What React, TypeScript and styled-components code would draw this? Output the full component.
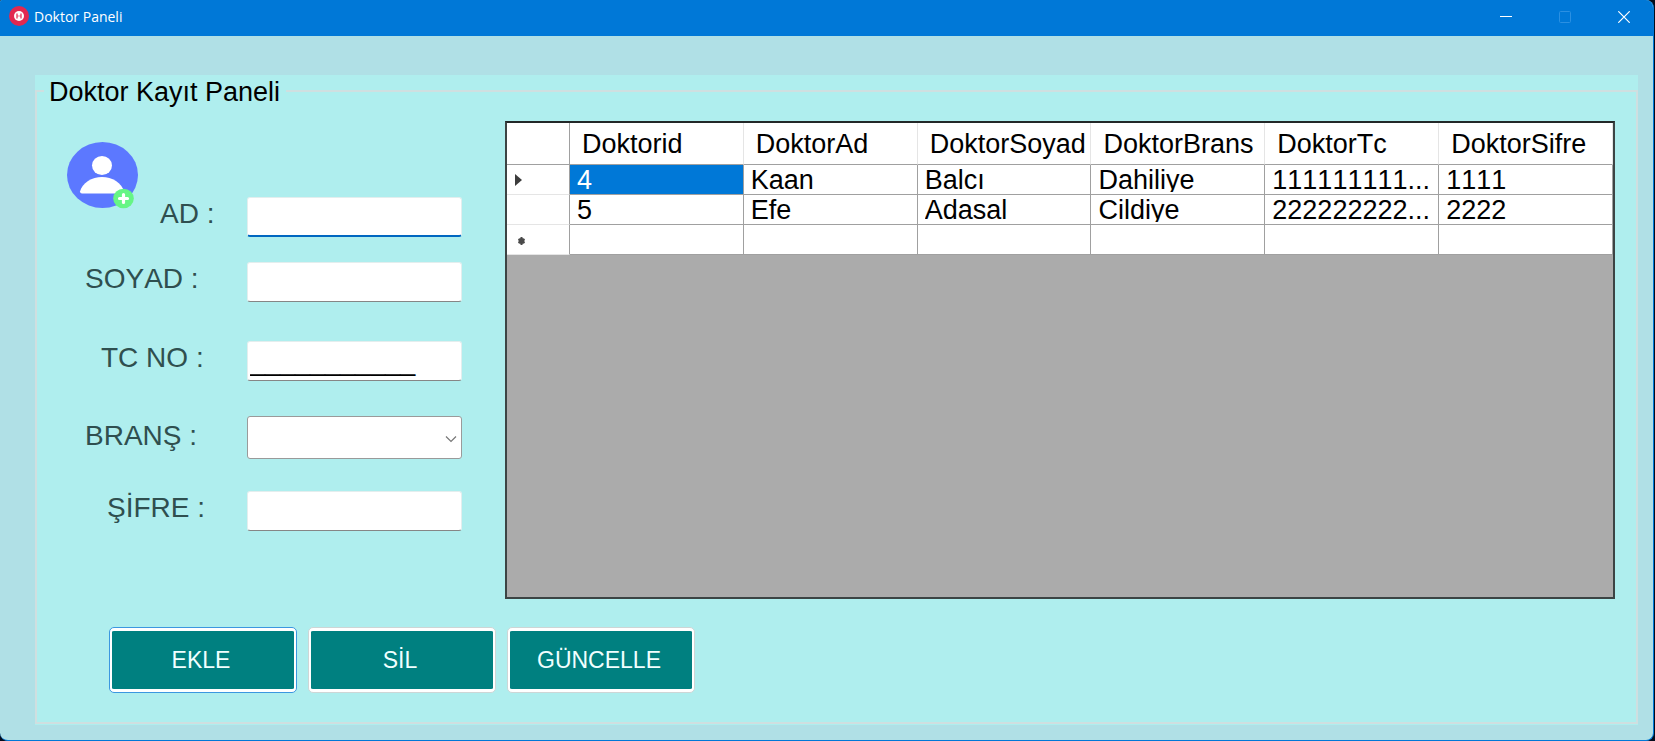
import React, { useState } from 'react';
import styled, { createGlobalStyle } from 'styled-components';

const GlobalStyle = createGlobalStyle`
  *, *::before, *::after { box-sizing: border-box; }
  html { background: #040c1c; }
  body {
    margin: 0;
    font-family: "Liberation Sans", Arial, sans-serif;
    font-kerning: none;
  }
`;

const Window = styled.div`
  display: flex;
  flex-direction: column;
  min-height: 100vh;
  margin-right: 1px;
  border: solid #0078d7;
  border-width: 0 1px 1px 0;
  border-radius: 2px 8px 8px 8px;
  background: #b0e0e6;
  overflow: hidden;
`;

const TitleBar = styled.header`
  display: flex;
  align-items: center;
  height: 36px;
  padding-left: 9px;
  background: #0078d7;
  color: #fff;
`;

const AppTitle = styled.h1`
  flex: 1;
  margin: 0 0 2px 5px;
  font: 400 14px/20px "Open Sans", "Noto Sans", sans-serif;
`;

const AppIcon = styled.svg`
  display: block;
  width: 20px;
  height: 20px;
  margin-bottom: 4px;
`;

const CaptionButton = styled.button`
  display: flex;
  align-items: center;
  justify-content: center;
  width: 59px;
  height: 34px;
  margin-bottom: 2px;
  padding: 0;
  border: 0;
  background: transparent;
  color: #fff;
  &:disabled { color: #2b90e2; }
`;

const Client = styled.main`
  display: flex;
  flex: 1;
  padding: 39px 15px 15px 35px;
`;

const Panel = styled.section`
  display: flex;
  flex: 1;
  min-width: 0;
  padding-bottom: 1px;
  background: #afeeee;
`;

const GroupBox = styled.fieldset`
  display: flex;
  flex-direction: column;
  flex: 1;
  min-width: 0;
  margin: 0;
  padding: 0 21px 29px 0;
  border: 2px solid #cfdfe0;
`;

const GroupTitle = styled.legend`
  margin-left: 7px;
  padding: 2px 6px 0 5px;
  font-size: 27px;
  line-height: 30px;
  color: #000;
`;

const Content = styled.div`
  display: flex;
  flex: 1;
`;

const Form = styled.form`
  flex: none;
  width: 468px;
  padding: 35px 43px 0 30px;
`;

const FormRow = styled.div<{ $gap?: number }>`
  display: flex;
  align-items: flex-end;
  margin-top: ${p => p.$gap ?? 0}px;
`;

const Avatar = styled.svg`
  display: block;
  width: 72px;
  height: 67px;
  margin-bottom: 28px;
`;

const Label = styled.label<{ $indent: number }>`
  flex: 1;
  padding-left: ${p => p.$indent}px;
  padding-bottom: 7px;
  font-size: 28px;
  line-height: 32px;
  white-space: nowrap;
  color: #2f4f4f;
`;

const TextBox = styled.input`
  width: 215px;
  height: 40px;
  padding: 0 2px;
  border: 1px solid #e3eeee;
  border-bottom-color: #868686;
  border-radius: 3px;
  background: #fff;
  font: 27px "Liberation Sans", Arial, sans-serif;
  color: #000;
  outline: none;
`;

const ActiveTextBox = styled(TextBox)`
  border-bottom: 2px solid #0067c0;
`;

const SelectWrap = styled.div`
  position: relative;
  width: 215px;
`;

const Select = styled.select`
  display: block;
  width: 100%;
  height: 43px;
  padding: 0 24px 0 4px;
  border: 1px solid #9a9a9a;
  border-radius: 3px;
  background: #fff;
  appearance: none;
  font: 27px "Liberation Sans", Arial, sans-serif;
`;

const Chevron = styled.svg`
  position: absolute;
  top: 19px;
  right: 5px;
  width: 12px;
  height: 8px;
  pointer-events: none;
`;

const GridFrame = styled.div`
  flex: 1;
  min-width: 0;
  margin-top: 14px;
  border: 2px solid #3c4444;
  border-top-color: #222828;
  background: #ababab;
`;

const Table = styled.table`
  width: 100%;
  table-layout: fixed;
  border-collapse: separate;
  border-spacing: 0;
  background: #fff;
  font-size: 27px;
  color: #000;
`;

const ColumnHeader = styled.th`
  height: 42px;
  padding: 1px 0 0 12px;
  border-right: 1px solid #e5e5e5;
  border-bottom: 1px solid #a0a0a0;
  font-weight: 400;
  line-height: 32px;
  text-align: left;
  white-space: nowrap;
`;

const CornerCell = styled.td`
  width: 63px;
  padding: 0;
  border-right: 1px solid #a0a0a0;
  border-bottom: 1px solid #a0a0a0;
`;

const RowHeader = styled.th`
  padding: 0 0 0 8px;
  border-right: 1px solid #a0a0a0;
  border-bottom: 1px solid #e5e5e5;
`;

const Cell = styled.td<{ $selected?: boolean }>`
  height: 30px;
  padding: 0 3px 0 7px;
  border-right: 1px solid #a0a0a0;
  border-bottom: 1px solid #a0a0a0;
  vertical-align: top;
  background: ${p => (p.$selected ? '#0078d7' : '#fff')};
  color: ${p => (p.$selected ? '#fff' : '#000')};
`;

const CellText = styled.div`
  height: 27px;
  line-height: 31px;
  overflow: hidden;
  text-overflow: ellipsis;
  white-space: nowrap;
`;

const RowGlyph = styled.svg`
  display: block;
  width: 12px;
  height: 14px;
`;

const Actions = styled.div`
  display: flex;
  gap: 11px;
  margin-top: 28px;
  padding-left: 72px;
`;

const ActionButton = styled.button<{ $default?: boolean }>`
  width: 188px;
  height: 66px;
  padding: 3px 2px;
  border: 1px solid ${p => (p.$default ? '#3b97e0' : '#cdd6d6')};
  border-radius: 5px;
  background: linear-gradient(#008080, #008080) content-box, #fff;
  font: 23px/32px "Liberation Sans", Arial, sans-serif;
  text-indent: -4px;
  color: #f0ffff;
`;

const columns = ['Doktorid', 'DoktorAd', 'DoktorSoyad', 'DoktorBrans', 'DoktorTc', 'DoktorSifre'];

const doctors = [
  ['4', 'Kaan', 'Balcı', 'Dahiliye', '111111111...', '1111'],
  ['5', 'Efe', 'Adasal', 'Cildiye', '222222222...', '2222'],
];

export default function App() {
  const [tc, setTc] = useState('___________');

  return (
    <>
      <GlobalStyle />
      <Window>
        <TitleBar>
          <AppIcon viewBox="0 0 20 20" aria-hidden="true">
            <circle cx="10" cy="10" r="10" fill="#e22850" />
            <circle cx="10" cy="10" r="5" fill="#fff" />
            <path d="M8 7.500v5M12 7.500v5" stroke="#e22850" strokeWidth="1.200" />
            <path d="M8 10h4" stroke="#e22850" strokeWidth=".6" />
          </AppIcon>
          <AppTitle>Doktor Paneli</AppTitle>
          <CaptionButton type="button" aria-label="Minimize">
            <svg width="12" height="12" viewBox="0 0 12 12"><path d="M0 5.5h12" stroke="currentColor" /></svg>
          </CaptionButton>
          <CaptionButton type="button" aria-label="Maximize" disabled>
            <svg width="12" height="12" viewBox="0 0 12 12" fill="none">
              <rect x=".5" y=".5" width="11" height="11" rx="1" stroke="currentColor" />
            </svg>
          </CaptionButton>
          <CaptionButton type="button" aria-label="Close">
            <svg width="12" height="12" viewBox="0 0 12 12">
              <path d="M.3.3l11.4 11.4M11.7.3L.3 11.7" stroke="currentColor" strokeWidth="1.2" />
            </svg>
          </CaptionButton>
        </TitleBar>

        <Client>
          <Panel>
            <GroupBox>
              <GroupTitle>Doktor Kayıt Paneli</GroupTitle>
              <Content>
                <Form id="doctor-form" onSubmit={e => e.preventDefault()}>
                  <FormRow>
                    <Avatar viewBox="0 0 72 67" aria-hidden="true">
                      <ellipse cx="35.5" cy="33" rx="35.5" ry="33" fill="#5c78ff" />
                      <ellipse cx="35" cy="23.500" rx="10" ry="9.500" fill="#fff" />
                      <path d="M13 49.500C15 41 25 35 35 35S55 41 57 49.500Q57 51.500 55 51.500H15Q13 51.500 13 49.500Z" fill="#fff" />
                      <ellipse cx="56.500" cy="56.500" rx="10.300" ry="9.800" fill="#66f585" />
                      <path d="M56.500 52.500v8M52.500 56.500h8" stroke="#fff" strokeWidth="3.200" strokeLinecap="round" />
                    </Avatar>
                    <Label htmlFor="ad" $indent={21}>AD :</Label>
                    <ActiveTextBox id="ad" type="text" />
                  </FormRow>
                  <FormRow $gap={25}>
                    <Label htmlFor="soyad" $indent={18}>SOYAD :</Label>
                    <TextBox id="soyad" type="text" />
                  </FormRow>
                  <FormRow $gap={39}>
                    <Label htmlFor="tc" $indent={34}>TC NO :</Label>
                    <TextBox id="tc" type="text" value={tc} onChange={e => setTc(e.target.value)} />
                  </FormRow>
                  <FormRow $gap={35}>
                    <Label htmlFor="brans" $indent={18}>BRANŞ :</Label>
                    <SelectWrap>
                      <Select id="brans"><option value="" /></Select>
                      <Chevron viewBox="0 0 12 8" fill="none" aria-hidden="true">
                        <path d="M1 1.500l5 5 5-5" stroke="#777" strokeWidth="1.200" />
                      </Chevron>
                    </SelectWrap>
                  </FormRow>
                  <FormRow $gap={32}>
                    <Label htmlFor="sifre" $indent={40}>ŞİFRE :</Label>
                    <TextBox id="sifre" type="text" />
                  </FormRow>
                </Form>

                <GridFrame>
                  <Table>
                    <thead>
                      <tr>
                        <CornerCell />
                        {columns.map(name => <ColumnHeader key={name} scope="col">{name}</ColumnHeader>)}
                      </tr>
                    </thead>
                    <tbody>
                      {doctors.map((doctor, row) => (
                        <tr key={doctor[0]}>
                          <RowHeader scope="row">
                            {row === 0 && (
                              <RowGlyph viewBox="0 0 12 14"><path d="M0 1v12l7-6z" fill="#3c3c3c" /></RowGlyph>
                            )}
                          </RowHeader>
                          {doctor.map((value, col) => (
                            <Cell key={columns[col]} $selected={row === 0 && col === 0}>
                              <CellText>{value}</CellText>
                            </Cell>
                          ))}
                        </tr>
                      ))}
                      <tr>
                        <RowHeader scope="row">
                          <RowGlyph viewBox="0 0 12 14">
                            <path d="M6.500 4v8M3.500 6l6 4M3.500 10l6-4" stroke="#4a4a4a" strokeWidth="2" />
                            <circle cx="6.500" cy="8" r="3" fill="#4a4a4a" />
                          </RowGlyph>
                        </RowHeader>
                        {columns.map(name => <Cell key={name} />)}
                      </tr>
                    </tbody>
                  </Table>
                </GridFrame>
              </Content>

              <Actions>
                <ActionButton type="submit" form="doctor-form" $default>EKLE</ActionButton>
                <ActionButton type="button">SİL</ActionButton>
                <ActionButton type="button">GÜNCELLE</ActionButton>
              </Actions>
            </GroupBox>
          </Panel>
        </Client>
      </Window>
    </>
  );
}
